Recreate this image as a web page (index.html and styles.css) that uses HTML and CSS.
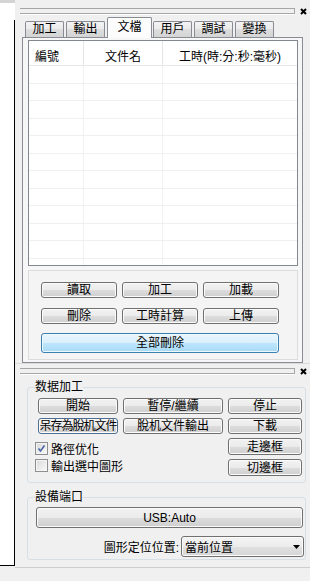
FILE: index.html
```html
<!DOCTYPE html>
<html lang="zh-Hant">
<head>
    <meta charset="UTF-8">
    <meta name="viewport" content="width=device-width, initial-scale=1.0">
    <title>文檔</title>
    <link rel="stylesheet" href="styles.css">
</head>
<body>
    <div class="app">
        <div class="side">
            <div class="side-top"></div>
            <div class="side-body"></div>
        </div>

        <div class="main">
            <div class="dock-head">
                <div class="grip"></div>
                <svg class="close" viewBox="0 0 7 7"><path d="M1 1L6 6M6 1L1 6"/></svg>
            </div>

            <div class="tabs">
                <div class="tab">加工</div>
                <div class="tab">輸出</div>
                <div class="tab active">文檔</div>
                <div class="tab">用戶</div>
                <div class="tab">調試</div>
                <div class="tab">變換</div>
            </div>

            <div class="tab-panel">
                <div class="list">
                    <div class="list-head">
                        <div class="col c1">編號</div>
                        <div class="col c2">文件名</div>
                        <div class="col c3">工時(時:分:秒:毫秒)</div>
                    </div>
                    <div class="row"><span class="c1"></span><span class="c2"></span><span class="c3"></span></div>
                    <div class="row"><span class="c1"></span><span class="c2"></span><span class="c3"></span></div>
                    <div class="row"><span class="c1"></span><span class="c2"></span><span class="c3"></span></div>
                    <div class="row"><span class="c1"></span><span class="c2"></span><span class="c3"></span></div>
                    <div class="row"><span class="c1"></span><span class="c2"></span><span class="c3"></span></div>
                    <div class="row"><span class="c1"></span><span class="c2"></span><span class="c3"></span></div>
                    <div class="row"><span class="c1"></span><span class="c2"></span><span class="c3"></span></div>
                    <div class="row"><span class="c1"></span><span class="c2"></span><span class="c3"></span></div>
                    <div class="row"><span class="c1"></span><span class="c2"></span><span class="c3"></span></div>
                    <div class="row"><span class="c1"></span><span class="c2"></span><span class="c3"></span></div>
                    <div class="row"><span class="c1"></span><span class="c2"></span><span class="c3"></span></div>
                    <div class="row"><span class="c1"></span><span class="c2"></span><span class="c3"></span></div>
                </div>

                <div class="actions">
                    <button class="btn">讀取</button>
                    <button class="btn">加工</button>
                    <button class="btn">加載</button>
                    <button class="btn">刪除</button>
                    <button class="btn">工時計算</button>
                    <button class="btn">上傳</button>
                    <button class="btn default wide">全部刪除</button>
                </div>
            </div>

            <div class="dock-head second">
                <div class="grip"></div>
                <svg class="close" viewBox="0 0 7 7"><path d="M1 1L6 6M6 1L1 6"/></svg>
            </div>

            <fieldset class="group">
                <legend>数据加工</legend>
                <div class="job-grid">
                    <button class="btn">開始</button>
                    <button class="btn">暫停/繼續</button>
                    <button class="btn">停止</button>
                    <button class="btn tight focus">呆存為脫机文件</button>
                    <button class="btn">脫机文件輸出</button>
                    <button class="btn">下載</button>
                    <div class="checks">
                        <label class="check">
                            <span class="box"><svg viewBox="0 0 9 9"><path d="M1.5 4.5L3.5 7L7.5 1.5"/></svg></span>
                            路徑优化
                        </label>
                        <label class="check">
                            <span class="box"></span>
                            輸出選中圖形
                        </label>
                    </div>
                    <button class="btn edge-a">走邊框</button>
                    <button class="btn edge-b">切邊框</button>
                </div>
            </fieldset>

            <fieldset class="group port">
                <legend>設備端口</legend>
                <button class="btn usb">USB:Auto</button>
                <div class="pos-row">
                    <span class="pos-label">圖形定位位置:</span>
                    <div class="select">
                        當前位置
                        <svg class="arrow" viewBox="0 0 7 4"><path d="M0 0H7L3.5 4Z"/></svg>
                    </div>
                </div>
            </fieldset>

            <div class="dock-foot"></div>
        </div>
    </div>
</body>
</html>
```

FILE: styles.css
```css
* {
    box-sizing: border-box;
}

body {
    margin: 0;
    background: #f0f0f0;
    font-family: 'Liberation Sans', 'Noto Sans CJK TC', sans-serif;
    font-size: 12px;
    color: #000;
}

.app {
    display: flex;
    width: 310px;
    height: 581px;
    overflow: hidden;
}

/* left document strip */
.side {
    width: 15px;
    flex: none;
    display: flex;
    flex-direction: column;
}

.side-top {
    height: 20px;
    background: #fff;
    border-top: 3px solid #d4d4d4;
}

.side-body {
    height: 546px;
    background: #fff;
    border-right: 1px solid #000;
    border-bottom: 1px solid #000;
}

.main {
    flex: 1;
    min-width: 0;
    display: flex;
    flex-direction: column;
}

/* dock panel caption */
.dock-head {
    display: flex;
    align-items: flex-start;
    height: 17px;
    padding: 0 3px 0 5px;
}

.dock-head.second {
    height: 16px;
    border-top: 1px solid #dadada;
}

.grip {
    flex: 1;
    height: 6px;
    margin-top: 8px;
    border: 1px solid #a6a6a6;
    border-left: none;
    box-shadow: 0 1px 0 #fff;
}

.dock-head.second .grip {
    margin-top: 4px;
}

.close {
    width: 7px;
    height: 7px;
    margin: 8px 0 0 5px;
    fill: none;
    stroke: #000;
    stroke-width: 2;
}

.dock-head.second .close {
    margin-top: 4px;
}

/* tabs */
.tabs {
    position: relative;
    display: flex;
    align-items: flex-end;
    height: 20px;
    padding-left: 10px;
}

.tab {
    width: 39px;
    height: 16px;
    margin-right: 2px;
    border: 1px solid #898c95;
    border-bottom: none;
    border-radius: 2px 2px 0 0;
    background: linear-gradient(#f3f3f3, #ebebeb 45%, #dedede 50%, #d4d4d4);
    text-align: center;
    line-height: 15px;
}

.tab.active {
    width: 45px;
    height: 21px;
    margin: 0 1px -1px 0;
    background: #fcfcfc;
    line-height: 18px;
}

.tab-panel {
    width: 281px;
    height: 326px;
    margin-left: 7px;
    padding: 2px 4px 2px 5px;
    border: 1px solid #898c95;
    background: #f6f6f6;
}

/* file list */
.list {
    height: 226px;
    border: 1px solid #828790;
    background: #fff;
    overflow: hidden;
}

.list-head {
    display: flex;
    height: 25px;
    border-bottom: 1px solid #e8e8e8;
}

.list-head .col {
    display: flex;
    align-items: center;
    justify-content: center;
    padding-top: 4px;
    border-right: 1px solid #e5e5e5;
    white-space: nowrap;
}

.list-head .c1 {
    justify-content: flex-start;
    padding-left: 6px;
}

.c1 {
    width: 55px;
}

.c2 {
    width: 79px;
}

.c3 {
    flex: 1;
}

.list-head .c3 {
    border-right: none;
}

.row {
    display: flex;
    height: 17.5px;
    border-bottom: 1px solid #f0f0f0;
}

.row span {
    border-right: 1px solid #f2f2f2;
}

.row .c3 {
    border-right: none;
}

/* buttons */
.btn {
    display: flex;
    align-items: center;
    justify-content: center;
    padding: 0;
    font: inherit;
    line-height: 14px;
    color: #000;
    white-space: nowrap;
    border: 1px solid #707070;
    border-radius: 3px;
    background: linear-gradient(#f2f2f2, #ebebeb 50%, #dddddd 51%, #cfcfcf);
    box-shadow: inset 0 0 0 1px #fbfbfb;
}

.btn.default {
    border-color: #3c7fb1;
    background: linear-gradient(#eaf6fd, #d9f0fc 50%, #bee6fd 51%, #a7d9f5);
    box-shadow: inset 0 0 0 1px #eef8fe;
}

.btn.focus {
    border-color: #4e6f93;
}

.btn.tight {
    letter-spacing: -1px;
}

.actions {
    display: grid;
    grid-template-columns: repeat(3, 76px);
    grid-template-rows: 16px 16px 20px;
    gap: 9.5px 5px;
    height: 90px;
    margin-top: 4px;
    padding: 11px 0 0 12px;
    border: 1px solid #dcdcdc;
    background: #f4f4f4;
}

.btn.wide {
    grid-column: 1 / 4;
}

/* group boxes */
.group {
    min-width: 0;
    margin: 0 4px 0 12px;
    padding: 3px 1px 6px 8px;
    border: 1px solid #d5dfe5;
    border-radius: 3px;
}

.group legend {
    margin-left: -1px;
    padding: 0;
    line-height: 16px;
}

.job-grid {
    display: grid;
    grid-template-columns: 80px 100px 74px;
    grid-template-rows: 16px 16px 17px 17px;
    gap: 4px 5px;
    margin-left: 2px;
}

.checks {
    grid-column: 1 / 3;
    grid-row: 3 / 5;
    display: flex;
    flex-direction: column;
    margin-left: -3px;
    padding-top: 2px;
}

.check {
    display: flex;
    align-items: center;
    gap: 3px;
    height: 17px;
    white-space: nowrap;
}

.box {
    display: flex;
    align-items: center;
    justify-content: center;
    width: 13px;
    height: 13px;
    border: 1px solid #8e8f8f;
    background: linear-gradient(135deg, #d8d8d8, #fbfbfb);
    box-shadow: inset 0 0 0 1px #f4f4f4;
}

.box svg {
    width: 9px;
    height: 9px;
    fill: none;
    stroke: #4b67a6;
    stroke-width: 1.6;
}

.edge-a {
    grid-column: 3;
    grid-row: 3;
}

.edge-b {
    grid-column: 3;
    grid-row: 4;
}

.port {
    margin-top: 6px;
    padding: 2px 1px 2px 8px;
}

.usb {
    width: 267px;
    height: 21px;
}

.pos-row {
    display: flex;
    justify-content: flex-end;
    align-items: center;
    height: 21px;
    margin-top: 8px;
}

.pos-label {
    margin-right: 2px;
    white-space: nowrap;
}

.select {
    display: flex;
    align-items: center;
    width: 123px;
    height: 21px;
    padding: 0 3px 0 3px;
    border: 1px solid #707070;
    border-radius: 3px;
    background: linear-gradient(#f4f4f4, #ececec 50%, #e0e0e0 51%, #d6d6d6);
    box-shadow: inset 0 0 0 1px #fbfbfb;
}

.arrow {
    width: 7px;
    height: 4px;
    margin-left: auto;
    fill: #000;
}

.dock-foot {
    margin-top: 7px;
    border-top: 1px solid #cdcdcd;
}
```
